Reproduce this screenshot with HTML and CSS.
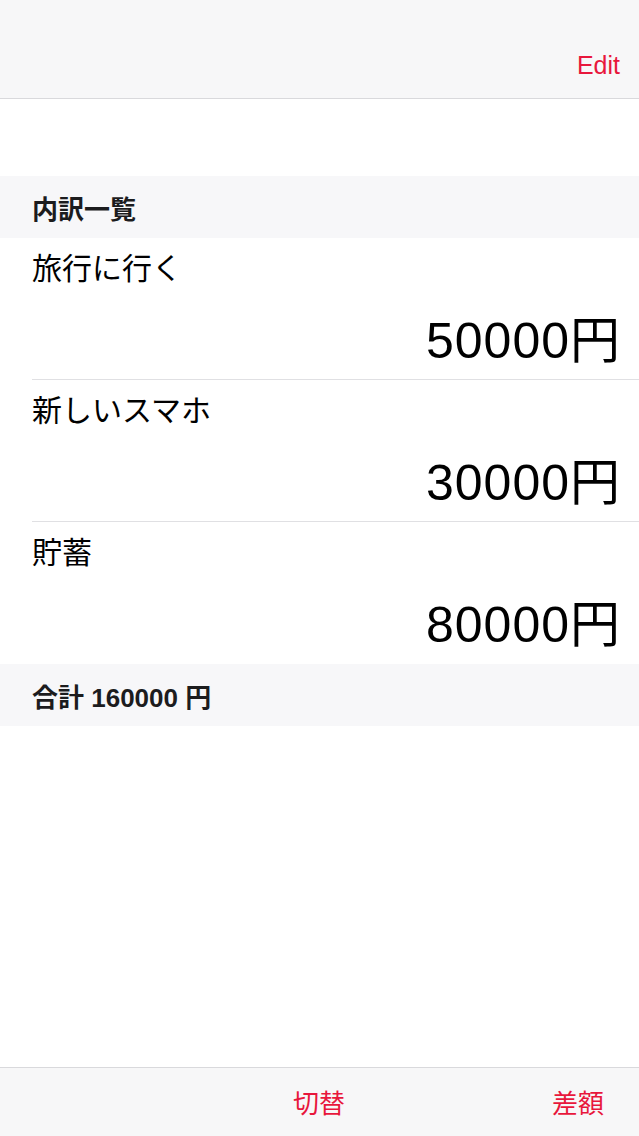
FILE: index.html
```html
<!DOCTYPE html>
<html lang="ja">
	<head>
		<meta charset="UTF-8">
		<meta content="width=device-width, initial-scale=1.0" name="viewport">
		<link rel="stylesheet" href="styles.css">
		<title>内訳一覧</title>
	</head>
	<body>
		<div class="screen">
			<div class="nav-bar">
				<span class="nav-button">Edit</span>
			</div>
			<div class="top-space"></div>

			<div class="section-header">内訳一覧</div>
			<div class="item-list">
				<div class="item-row">
					<div class="item-title">旅行に行く</div>
					<div class="item-amount">50000円</div>
				</div>
				<div class="item-row">
					<div class="item-title">新しいスマホ</div>
					<div class="item-amount">30000円</div>
				</div>
				<div class="item-row last">
					<div class="item-title">貯蓄</div>
					<div class="item-amount">80000円</div>
				</div>
			</div>
			<div class="section-header">合計 160000 円</div>

			<div class="filler"></div>

			<div class="toolbar">
				<span class="toolbar-button">切替</span>
				<span class="toolbar-button">差額</span>
			</div>
		</div>
	</body>
</html>
```

FILE: styles.css
```css
body {
    margin: 0;
    background-color: #FFF;
    font-family: 'Liberation Sans', 'Noto Sans CJK JP', sans-serif;
    color: #000;
}

.screen {
    display: flex;
    flex-direction: column;
    height: 1136px;
}

.nav-bar {
    display: flex;
    align-items: flex-end;
    justify-content: flex-end;
    height: 99px;
    padding: 0 19px 0 0;
    box-sizing: border-box;
    background-color: #F7F7F8;
    border-bottom: 1px solid #D9D9DC;
}

.nav-button {
    color: #E8173C;
    font-size: 25px;
    line-height: 30px;
    margin-bottom: 18px;
}

.top-space {
    height: 77px;
}

.section-header {
    display: flex;
    align-items: center;
    height: 62px;
    padding-left: 32px;
    background-color: #F7F7F9;
    font-size: 26px;
    font-weight: bold;
    color: #1C1C1E;
}

.item-row {
    display: flex;
    flex-direction: column;
    height: 142px;
    box-sizing: border-box;
    padding: 11px 18px 0 32px;
    position: relative;
}

.item-row::after {
    content: '';
    position: absolute;
    left: 32px;
    right: 0;
    bottom: 0;
    height: 1px;
    background-color: #E0E0E3;
}

.item-row.last::after {
    display: none;
}

.item-title {
    font-size: 30px;
    line-height: 40px;
}

.item-amount {
    margin-top: 22px;
    font-size: 50px;
    line-height: 60px;
    text-align: right;
    letter-spacing: 1px;
}

.filler {
    flex: 1;
}

.toolbar {
    display: flex;
    align-items: center;
    justify-content: flex-end;
    gap: 207px;
    height: 69px;
    box-sizing: border-box;
    padding: 0 35px 2px 0;
    background-color: #F7F7F8;
    border-top: 1px solid #D9D9DC;
}

.toolbar-button {
    color: #E8173C;
    font-size: 26px;
}
```
